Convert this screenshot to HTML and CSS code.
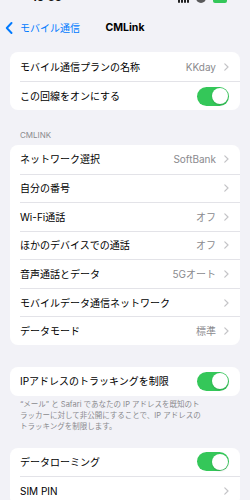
FILE: index.html
```html
<!DOCTYPE html>
<html lang="ja">
<head>
<meta charset="utf-8">
<link rel="stylesheet" href="styles.css">
</head>
<body>
<div class="status">
  <span class="time">10:53</span>
  <span class="status-right">
    <span class="signal"><i></i><i></i><i></i><i></i></span>
    <span class="wifi"></span>
    <span class="battery"></span>
  </span>
</div>
<header class="nav">
  <a class="back">
    <svg width="8" height="12" viewBox="0 0 8 12"><path d="M6.5 1 L1.8 6 L6.5 11" fill="none" stroke="#007aff" stroke-width="1.9" stroke-linecap="round" stroke-linejoin="round"/></svg>
    <span>モバイル通信</span>
  </a>
  <h1 class="title">CMLink</h1>
  <span></span>
</header>
<main class="content">
  <section class="card card-first">
    <div class="row"><div class="inner"><span class="label">モバイル通信プランの名称</span><span class="value">KKday</span><span class="chev"></span></div></div>
    <div class="row"><div class="inner"><span class="label">この回線をオンにする</span><span class="toggle"></span></div></div>
  </section>

  <div class="group-header">CMLINK</div>
  <section class="card">
    <div class="row"><div class="inner"><span class="label">ネットワーク選択</span><span class="value">SoftBank</span><span class="chev"></span></div></div>
    <div class="row"><div class="inner"><span class="label">自分の番号</span><span class="value"></span><span class="chev"></span></div></div>
    <div class="row"><div class="inner"><span class="label">Wi-Fi通話</span><span class="value">オフ</span><span class="chev"></span></div></div>
    <div class="row"><div class="inner"><span class="label">ほかのデバイスでの通話</span><span class="value">オフ</span><span class="chev"></span></div></div>
    <div class="row"><div class="inner"><span class="label">音声通話とデータ</span><span class="value">5Gオート</span><span class="chev"></span></div></div>
    <div class="row"><div class="inner"><span class="label">モバイルデータ通信ネットワーク</span><span class="value"></span><span class="chev"></span></div></div>
    <div class="row"><div class="inner"><span class="label">データモード</span><span class="value">標準</span><span class="chev"></span></div></div>
  </section>

  <section class="card card-gap">
    <div class="row"><div class="inner"><span class="label">IPアドレスのトラッキングを制限</span><span class="toggle"></span></div></div>
  </section>
  <p class="footer">“メール” と Safari であなたの IP アドレスを既知のト<br>ラッカーに対して非公開にすることで、IP アドレスの<br>トラッキングを制限します。</p>

  <section class="card card-last">
    <div class="row"><div class="inner"><span class="label">データローミング</span><span class="toggle"></span></div></div>
    <div class="row"><div class="inner"><span class="label">SIM PIN</span><span class="value"></span><span class="chev"></span></div></div>
  </section>
</main>
</body>
</html>
```
FILE: styles.css
```css
* { box-sizing: border-box; }
html, body { margin: 0; padding: 0; }
body {
  width: 250px;
  height: 500px;
  overflow: hidden;
  background: #f2f2f7;
  font-family: Inter, "Noto Sans CJK JP", sans-serif;
  color: #000;
}
.status {
  height: 3px;
  overflow: hidden;
  display: flex;
  align-items: flex-end;
  justify-content: space-between;
  padding: 0 23px 0 32px;
}
.time {
  font-size: 11px;
  font-weight: 700;
  line-height: 8px;
  height: 10px;
  color: #111;
}
.status-right {
  display: flex;
  align-items: flex-end;
  gap: 7px;
  height: 10px;
}
.signal { display: flex; gap: 1px; align-items: flex-end; height: 10px; }
.signal i { display: block; width: 2px; height: 8px; background: #222; border-radius: 0 0 1px 1px; }
.wifi { width: 10px; height: 8px; background: #333; border-radius: 0 0 5px 5px; opacity: .8; }
.battery { width: 14px; height: 8px; background: #34c759; border-radius: 0 0 2px 2px; }

.nav {
  height: 49px;
  display: grid;
  grid-template-columns: 1fr auto 1fr;
  align-items: center;
}
.back {
  display: flex;
  align-items: center;
  gap: 7px;
  padding-left: 5px;
  color: #007aff;
  font-size: 10px;
  line-height: 12px;
}
.back svg { display: block; }
.title {
  margin: 0;
  font-size: 10.5px;
  font-weight: 700;
  line-height: 12px;
}

.content { padding: 0 10px; }
.card {
  background: #fff;
  border-radius: 8px;
  overflow: hidden;
}
.card-first .row { height: 29px; }
.card-gap { margin-top: 22px; }
.card-last { margin-top: 15.5px; }

.row {
  height: 28.57px;
  padding-left: 10px;
  display: flex;
}
.inner {
  flex: 1;
  display: flex;
  align-items: center;
  padding-right: 11px;
  border-top: 1px solid #e3e3e8;
  font-size: 10px;
  line-height: 12px;
}
.row:first-child .inner { border-top: none; }
.label { flex: 1; white-space: nowrap; }
.value { color: #8a8a8e; margin-right: 8px; }
.chev {
  width: 5px;
  height: 8px;
  background: no-repeat center/5px 8px url("data:image/svg+xml,%3Csvg xmlns='http://www.w3.org/2000/svg' width='5' height='8' viewBox='0 0 5 8'%3E%3Cpath d='M0.8 0.8 L4 4 L0.8 7.2' fill='none' stroke='%23c4c4c7' stroke-width='1.2' stroke-linecap='round' stroke-linejoin='round'/%3E%3C/svg%3E");
}
.toggle {
  position: relative;
  width: 32px;
  height: 19px;
  border-radius: 10px;
  background: #34c759;
}
.toggle::after {
  content: "";
  position: absolute;
  right: 1.5px;
  top: 1.5px;
  width: 16px;
  height: 16px;
  border-radius: 50%;
  background: #fff;
  box-shadow: 0 1px 2px rgba(0,0,0,.15);
}

.group-header {
  padding: 20px 0 5px 10px;
  font-size: 8px;
  line-height: 10px;
  color: #8a8a8e;
}
.footer {
  margin: 0;
  padding: 3.5px 0 0 10px;
  font-size: 7.5px;
  line-height: 11px;
  color: #8a8a8e;
  white-space: nowrap;
}
```
